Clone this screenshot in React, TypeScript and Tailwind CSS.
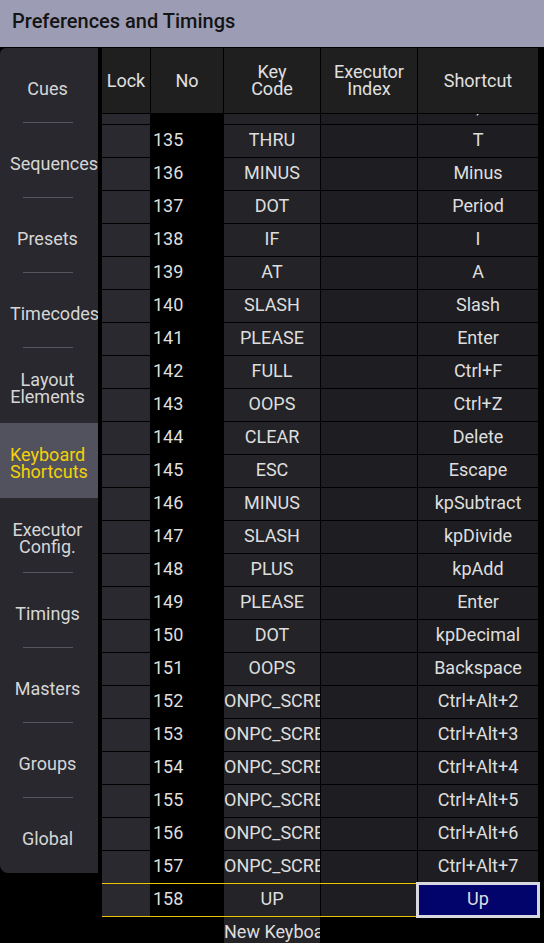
import React from 'react';

type Row = { no: number; key: string; shortcut: string };

const rows: Row[] = [
  { no: 134, key: 'COMMA', shortcut: ',' },
  { no: 135, key: 'THRU', shortcut: 'T' },
  { no: 136, key: 'MINUS', shortcut: 'Minus' },
  { no: 137, key: 'DOT', shortcut: 'Period' },
  { no: 138, key: 'IF', shortcut: 'I' },
  { no: 139, key: 'AT', shortcut: 'A' },
  { no: 140, key: 'SLASH', shortcut: 'Slash' },
  { no: 141, key: 'PLEASE', shortcut: 'Enter' },
  { no: 142, key: 'FULL', shortcut: 'Ctrl+F' },
  { no: 143, key: 'OOPS', shortcut: 'Ctrl+Z' },
  { no: 144, key: 'CLEAR', shortcut: 'Delete' },
  { no: 145, key: 'ESC', shortcut: 'Escape' },
  { no: 146, key: 'MINUS', shortcut: 'kpSubtract' },
  { no: 147, key: 'SLASH', shortcut: 'kpDivide' },
  { no: 148, key: 'PLUS', shortcut: 'kpAdd' },
  { no: 149, key: 'PLEASE', shortcut: 'Enter' },
  { no: 150, key: 'DOT', shortcut: 'kpDecimal' },
  { no: 151, key: 'OOPS', shortcut: 'Backspace' },
  { no: 152, key: 'ONPC_SCREEN2', shortcut: 'Ctrl+Alt+2' },
  { no: 153, key: 'ONPC_SCREEN3', shortcut: 'Ctrl+Alt+3' },
  { no: 154, key: 'ONPC_SCREEN4', shortcut: 'Ctrl+Alt+4' },
  { no: 155, key: 'ONPC_SCREEN5', shortcut: 'Ctrl+Alt+5' },
  { no: 156, key: 'ONPC_SCREEN6', shortcut: 'Ctrl+Alt+6' },
  { no: 157, key: 'ONPC_SCREEN7', shortcut: 'Ctrl+Alt+7' },
];

const menu = [
  ['Cues'],
  ['Sequences'],
  ['Presets'],
  ['Timecodes'],
  ['Layout', 'Elements'],
  ['Keyboard', 'Shortcuts'],
  ['Executor', 'Config.'],
  ['Timings'],
  ['Masters'],
  ['Groups'],
  ['Global'],
];
const ACTIVE = 5;

function Sidebar() {
  return (
    <div className="w-[98px] shrink-0 self-start bg-[#28282e] rounded-tl-[6px] rounded-bl-[8px] overflow-hidden">
      {menu.map((lines, i) => {
        const active = i === ACTIVE;
        const sep = i < menu.length - 1 && !active && i + 1 !== ACTIVE;
        return (
          <div
            key={i}
            className={`relative h-[75px] flex flex-col justify-center pt-[5px] text-[18px] leading-[17px] whitespace-nowrap ${
              active ? 'bg-[#51525e] text-[#f4d10a]' : 'text-[#d6d6d6]'
            }`}
          >
            {lines.map((l) => (
              <span key={l} className="block ml-[10px] w-[75px] text-center">
                {l}
              </span>
            ))}
            {sep && <div className="absolute bottom-0 left-[23px] w-[50px] h-px bg-[#55555d]" />}
          </div>
        );
      })}
    </div>
  );
}

function HeadCell({ w, children }: { w: string; children: React.ReactNode }) {
  return (
    <div className={`${w} h-[65px] pb-[1px] bg-[#1f1f1f] flex flex-col items-center justify-center text-[18px] leading-[17px] text-[#e0e0e0]`}>
      {children}
    </div>
  );
}

function BodyRow({ row, selected }: { row: Row; selected?: boolean }) {
  return (
    <div className="flex gap-px h-[32px] text-[18px] text-[#dedede]">
      <div className="w-[48px] bg-[#29292f]" />
      <div className="w-[72px] bg-black pl-[2px] pb-[3px] flex items-center">{row.no}</div>
      <div className="w-[96px] bg-[#242428] text-center whitespace-nowrap overflow-hidden leading-[29px]">{row.key}</div>
      <div className="w-[96px] bg-[#1e1e22]" />
      {selected ? (
        <div className="relative w-[120px] bg-[#03036c] pb-[3px] flex items-center justify-center">
          <div className="absolute -inset-[2px] border-[3px] border-[#d8d8e0]" />
          <span className="relative">{row.shortcut}</span>
        </div>
      ) : (
        <div className="w-[120px] bg-[#1e1e22] pb-[3px] flex items-center justify-center whitespace-nowrap">{row.shortcut}</div>
      )}
    </div>
  );
}

export default function App() {
  return (
    <div className="w-[544px] h-[943px] bg-black overflow-hidden flex flex-col font-['Roboto','Liberation_Sans',sans-serif]">
      <div className="h-[47px] shrink-0 bg-[#9c9db5] flex items-center pl-[12px] pb-[5px] text-[20px] font-medium text-[#141414]">
        Preferences and Timings
      </div>
      <div className="flex mt-px gap-[4px] flex-1 min-h-0">
        <Sidebar />
        <div className="flex flex-col flex-1 min-w-0">
          <div className="flex gap-px w-[436px] pb-px">
            <HeadCell w="w-[48px]">Lock</HeadCell>
            <HeadCell w="w-[72px]">No</HeadCell>
            <HeadCell w="w-[96px]">
              <span>Key</span>
              <span>Code</span>
            </HeadCell>
            <HeadCell w="w-[96px]">
              <span>Executor</span>
              <span>Index</span>
            </HeadCell>
            <HeadCell w="w-[120px]">Shortcut</HeadCell>
          </div>
          <div className="flex-1 min-h-0 overflow-hidden">
            <div className="flex flex-col w-[436px] -mt-[22px]">
              {rows.map((r) => (
                <React.Fragment key={r.no}>
                  <BodyRow row={r} />
                  <div className={`h-px ${r.no === 157 ? 'bg-[#ecc500]' : 'bg-black'}`} />
                </React.Fragment>
              ))}
              <BodyRow row={{ no: 158, key: 'UP', shortcut: 'Up' }} selected />
              <div className="h-px bg-[#ecc500]" />
              <div className="flex gap-px h-[32px] text-[18px] text-[#dedede]">
                <div className="w-[48px]" />
                <div className="w-[72px]" />
                <div className="w-[96px] bg-[#242428] text-center whitespace-nowrap overflow-hidden leading-[29px]">
                  New Keyboard Shortcut
                </div>
              </div>
            </div>
          </div>
        </div>
      </div>
    </div>
  );
}
